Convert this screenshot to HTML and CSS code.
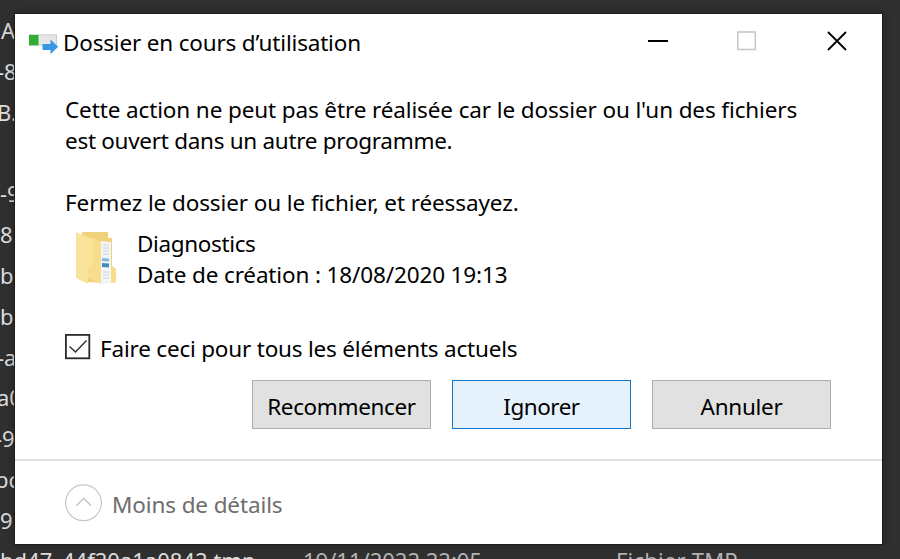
FILE: index.html
```html
<!DOCTYPE html>
<html lang="fr">
<head>
<meta charset="utf-8">
<title>Dossier en cours d’utilisation</title>
<link rel="stylesheet" href="styles.css">
</head>
<body>
<div class="desktop">
  <div class="files">
    <div class="row first"><span class="name"></span><span class="date">p p</span></div>
    <div class="row indent">A</div>
    <div class="row outdent">-8</div>
    <div class="row outdent">B.</div>
    <div class="row"></div>
    <div class="row">-9</div>
    <div class="row">8.</div>
    <div class="row">b</div>
    <div class="row">b9</div>
    <div class="row outdent">-a</div>
    <div class="row outdent">a0</div>
    <div class="row outdent-more">-9</div>
    <div class="row outdent-more">bc</div>
    <div class="row">9.</div>
    <div class="row last"><span class="name">bd47_44f20a1a0842.tmp</span><span class="date">19/11/2022 22:05</span><span class="type">Fichier TMP</span></div>
  </div>

  <main class="dialog">
    <header class="titlebar">
      <svg class="app-icon" width="30" height="22" viewBox="0 0 30 22">
        <rect x=".5" y=".8" width="27" height="10.4" fill="#e6e6e6" stroke="#cfcfcf"/>
        <rect x="0" y="1" width="9.5" height="10.3" fill="#31ad31"/>
        <path d="M13.5 10h8V5.5l7.7 7.2-7.7 7.5V16h-8z" fill="#3a97e3"/>
      </svg>
      <h1 class="title">Dossier en cours d’utilisation</h1>
      <svg class="controls" width="200" height="24" viewBox="0 0 200 24" fill="none">
        <path d="M0 13h20" stroke="#000" stroke-width="2"/>
        <rect x="89.8" y="4" width="17.5" height="17.5" stroke="#c8c8c8" stroke-width="1.6"/>
        <path d="M180 4l18 18M198 4l-18 18" stroke="#000" stroke-width="1.8"/>
      </svg>
    </header>
    <section class="body">
      <p class="line l1">Cette action ne peut pas être réalisée car le dossier ou l'un des fichiers</p>
      <p class="line l2">est ouvert dans un autre programme.</p>
      <p class="line l3">Fermez le dossier ou le fichier, et réessayez.</p>
      <div class="item">
        <svg class="folder" width="42" height="54" viewBox="0 0 42 54">
          <path d="M6 1h26v6h4v28l4 3v13l-8 1-22-1z" fill="#eed17a"/>
          <path d="M25 10l10 1v41l-10 1z" fill="#f3f5f7"/>
          <path d="M27 14h6M27 17h6M27 20h6M27 23h6M27 41h6M27 44h6M27 47h6" stroke="#c3d3df"/>
          <path d="M26 27l7 .5v3l-7-.5z" fill="#7fb9dc"/>
          <path d="M26 32l7 .5v4l-7-.5z" fill="#3e8dbe"/>
          <path d="M12 4l13 6v42l-13-6z" fill="#f2d57e"/>
          <path d="M0 1l17 7v26l-5 3v16L0 47z" fill="#f9e29a"/>
          <path d="M17 7l8 4v42l-13-6V37l5-4z" fill="#f7dd8c"/>
          <path d="M35 35l5 3v13l-5 1z" fill="#f8dd87"/>
        </svg>
        <div>
          <p class="line i1">Diagnostics</p>
          <p class="line i2">Date de création : 18/08/2020 19:13</p>
        </div>
      </div>
      <label class="check">
        <svg class="box" width="26" height="26" viewBox="0 0 26 26" fill="none">
          <rect x=".9" y=".9" width="23.4" height="23.4" stroke="#2a2a2a" stroke-width="1.8"/>
          <path d="M4.5 12.5l6 5.5L21.5 6.5" stroke="#333" stroke-width="1.5"/>
        </svg>
        <span class="line c1">Faire ceci pour tous les éléments actuels</span>
      </label>
      <div class="buttons">
        <button class="btn"><span class="b1">Recommencer</span></button>
        <button class="btn focus"><span class="b2">Ignorer</span></button>
        <button class="btn"><span class="b3">Annuler</span></button>
      </div>
    </section>
    <footer class="footer">
      <svg class="chevron" width="38" height="38" viewBox="0 0 38 38" fill="none">
        <circle cx="18.5" cy="18.8" r="17.9" stroke="#c8c8c8" stroke-width="1.2"/>
        <path d="M11.5 21.5l7.2-7.2 7.2 7.2" stroke="#bcbcbc" stroke-width="1.3"/>
      </svg>
      <span class="line f1">Moins de détails</span>
    </footer>
  </main>
</div>
</body>
</html>
```
FILE: styles.css
```css
* { box-sizing: border-box; }
body { margin: 0; }
.desktop {
  position: relative;
  width: 900px;
  height: 559px;
  overflow: hidden;
  background: #303030;
  font-family: "Noto Sans", "Open Sans", sans-serif;
  font-size: 22.5px;
  color: #000;
}
.files { margin-top: -31px; color: #dedede; font-size: 22px; }
.row { height: 40.85px; line-height: 40.85px; white-space: pre; }
.indent { padding-left: 1px; }
.outdent { text-indent: -3px; }
.outdent-more { text-indent: -5px; }
.first, .last { display: flex; }
.last { margin-top: -1px; }
.name { width: 303px; flex: none; }
.date { width: 313px; flex: none; color: #b4b4b4; }
.first .date { margin-top: -3px; padding-left: 22px; color: #ddd; word-spacing: 15px; }
.type { color: #b4b4b4; letter-spacing: .2px; }

.dialog {
  position: absolute;
  left: 14px;
  top: 13px;
  width: 869px;
  height: 532px;
  border: 1px solid #1c1c1c;
  background: #fff;
  box-shadow: 0 0 10px rgba(0, 0, 0, .3);
}
.titlebar { display: flex; height: 64px; padding-left: 14px; }
.app-icon { margin-top: 20px; flex: none; }
.title { margin: 13px 0 0 4px; font-size: 22.5px; font-weight: 400; line-height: 31px; width: 585px; white-space: nowrap; letter-spacing: -.18px; }
.controls { margin-top: 14px; flex: none; }
.body { padding: 16px 51px 0 50px; height: 381px; }
.line { margin: 0; line-height: 31px; white-space: nowrap; }
.l1 { letter-spacing: -.12px; }
.l2 { letter-spacing: -.29px; }
.l3 { margin-top: 31px; letter-spacing: -.1px; }
.i1 { letter-spacing: -.36px; }
.i2 { letter-spacing: -.14px; }
.c1 { letter-spacing: -.2px; }
.b1 { letter-spacing: -.36px; }
.b2 { letter-spacing: -.5px; }
.b3 { letter-spacing: -.3px; }
.item { display: flex; margin-top: 10px; }
.folder { margin: 3px 19px 0 11px; flex: none; }
.check { display: flex; margin-top: 43px; }
.box { margin: 1px 9px 0 0; flex: none; }
.buttons { display: flex; justify-content: flex-end; gap: 21px; margin-top: 16px; }
.btn {
  width: 179px;
  height: 49px;
  padding: 3px 0 0;
  border: 1px solid #adadad;
  background: #e1e1e1;
  color: #000;
  font: inherit;
}
.focus { border-color: #0f78cc; background: #e5f1fb; }
.footer { display: flex; border-top: 2px solid #e0e0e0; padding: 22px 0 0 50px; color: #6d6d6d; }
.chevron { margin-top: 1px; flex: none; }
.f1 { margin: 6px 0 0 9px; letter-spacing: -.12px; }
```
